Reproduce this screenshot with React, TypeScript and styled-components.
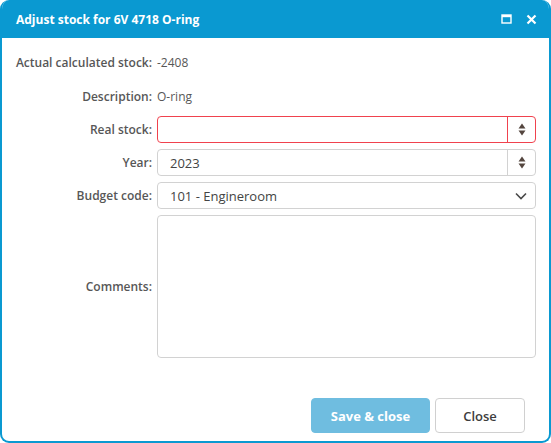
import React from "react";
import styled, { createGlobalStyle } from "styled-components";

const GlobalStyle = createGlobalStyle`
  html, body {
    margin: 0;
    padding: 0;
    background: #ffffff;
  }
  * {
    box-sizing: border-box;
  }
`;

const Window = styled.div`
  width: 551px;
  height: 443px;
  display: flex;
  flex-direction: column;
  border: 2px solid #0a99d1;
  border-top: none;
  border-radius: 9px;
  overflow: hidden;
  font-family: "Open Sans", "Liberation Sans", sans-serif;
  background: #ffffff;
`;

const TitleBar = styled.div`
  height: 38px;
  flex-shrink: 0;
  margin: 0 -2px;
  padding: 0 14px 0 16px;
  background: #0a99d1;
  display: flex;
  align-items: center;
  justify-content: space-between;
`;

const Title = styled.span`
  color: #ffffff;
  font-size: 12px;
  font-weight: 700;
`;

const TitleActions = styled.div`
  display: flex;
  align-items: center;
  gap: 13px;
`;

const TitleButton = styled.button`
  border: none;
  background: transparent;
  padding: 0;
  width: 12px;
  height: 12px;
  display: flex;
  align-items: center;
  justify-content: center;
  cursor: pointer;
`;

const Body = styled.div`
  flex: 1;
  padding: 10px 13px 0 14px;
`;

const Form = styled.div`
  display: grid;
  grid-template-columns: 136px 1fr;
  column-gap: 5px;
  row-gap: 6px;
`;

const Label = styled.div<{ $tall?: boolean }>`
  display: flex;
  align-items: center;
  justify-content: flex-end;
  font-size: 12px;
  font-weight: 600;
  color: #575757;
  white-space: nowrap;
  height: ${(p) => (p.$tall ? "auto" : "27px")};
`;

const InfoLabel = styled(Label)`
  height: 28px;
`;

const Value = styled.div`
  display: flex;
  align-items: center;
  height: 28px;
  font-size: 12px;
  color: #575757;
`;

const Field = styled.div<{ $invalid?: boolean }>`
  height: 27px;
  display: flex;
  align-items: stretch;
  border: 1px solid ${(p) => (p.$invalid ? "#f0424e" : "#d2d2d2")};
  border-radius: 4px;
  background: #ffffff;
`;

const FieldText = styled.div`
  flex: 1;
  display: flex;
  align-items: center;
  padding-left: 12px;
  font-size: 13px;
  color: #444444;
`;

const Spinner = styled.div<{ $invalid?: boolean }>`
  width: 28px;
  border-left: 1px solid ${(p) => (p.$invalid ? "#f0424e" : "#d2d2d2")};
  display: flex;
  align-items: center;
  justify-content: center;
`;

const Chevron = styled.div`
  width: 28px;
  display: flex;
  align-items: center;
  justify-content: center;
`;

const TextArea = styled.div`
  height: 143px;
  border: 1px solid #d2d2d2;
  border-radius: 4px;
`;

const Footer = styled.div`
  flex-shrink: 0;
  display: flex;
  justify-content: flex-end;
  gap: 5px;
  padding: 0 24px 8px 0;
`;

const Button = styled.button<{ $primary?: boolean }>`
  height: 35px;
  padding: 0;
  width: ${(p) => (p.$primary ? "119px" : "90px")};
  border-radius: 4px;
  border: 1px solid ${(p) => (p.$primary ? "#6fbde0" : "#d0d0d0")};
  background: ${(p) => (p.$primary ? "#6fbde0" : "#ffffff")};
  color: ${(p) => (p.$primary ? "#ffffff" : "#3d3d3d")};
  font-family: "Open Sans", "Liberation Sans", sans-serif;
  font-size: 13px;
  font-weight: ${(p) => (p.$primary ? 700 : 600)};
  cursor: pointer;
`;

const SpinIcon = () => (
  <svg width="8" height="13" viewBox="0 0 8 13">
    <path d="M4 0.5 L7.5 5.5 L0.5 5.5 Z" fill="#54463f" />
    <path d="M0.5 7.5 L7.5 7.5 L4 12.5 Z" fill="#54463f" />
  </svg>
);

const ChevronIcon = () => (
  <svg width="12" height="8" viewBox="0 0 12 8">
    <path d="M1 1.5 L6 6.5 L11 1.5" stroke="#4a4a4a" strokeWidth="1.6" fill="none" />
  </svg>
);

const MaximizeIcon = () => (
  <svg width="11" height="10" viewBox="0 0 11 10">
    <rect x="1" y="1" width="9" height="8" stroke="#ffffff" strokeWidth="1.4" fill="none" />
    <rect x="1" y="1" width="9" height="2.2" fill="#ffffff" />
  </svg>
);

const CloseIcon = () => (
  <svg width="11" height="11" viewBox="0 0 11 11">
    <path d="M1.5 1.5 L9.5 9.5 M9.5 1.5 L1.5 9.5" stroke="#ffffff" strokeWidth="2.2" />
  </svg>
);

const App = () => {
  return (
    <>
      <GlobalStyle />
      <Window>
        <TitleBar>
          <Title>Adjust stock for 6V 4718 O-ring</Title>
          <TitleActions>
            <TitleButton>
              <MaximizeIcon />
            </TitleButton>
            <TitleButton>
              <CloseIcon />
            </TitleButton>
          </TitleActions>
        </TitleBar>
        <Body>
          <Form>
            <InfoLabel>Actual calculated stock:</InfoLabel>
            <Value>-2408</Value>
            <InfoLabel>Description:</InfoLabel>
            <Value>O-ring</Value>

            <Label>Real stock:</Label>
            <Field $invalid>
              <FieldText />
              <Spinner $invalid>
                <SpinIcon />
              </Spinner>
            </Field>

            <Label>Year:</Label>
            <Field>
              <FieldText>2023</FieldText>
              <Spinner>
                <SpinIcon />
              </Spinner>
            </Field>

            <Label>Budget code:</Label>
            <Field>
              <FieldText>101 - Engineroom</FieldText>
              <Chevron>
                <ChevronIcon />
              </Chevron>
            </Field>

            <Label $tall>Comments:</Label>
            <TextArea />
          </Form>
        </Body>
        <Footer>
          <Button $primary>Save &amp; close</Button>
          <Button>Close</Button>
        </Footer>
      </Window>
    </>
  );
};

export default App;
